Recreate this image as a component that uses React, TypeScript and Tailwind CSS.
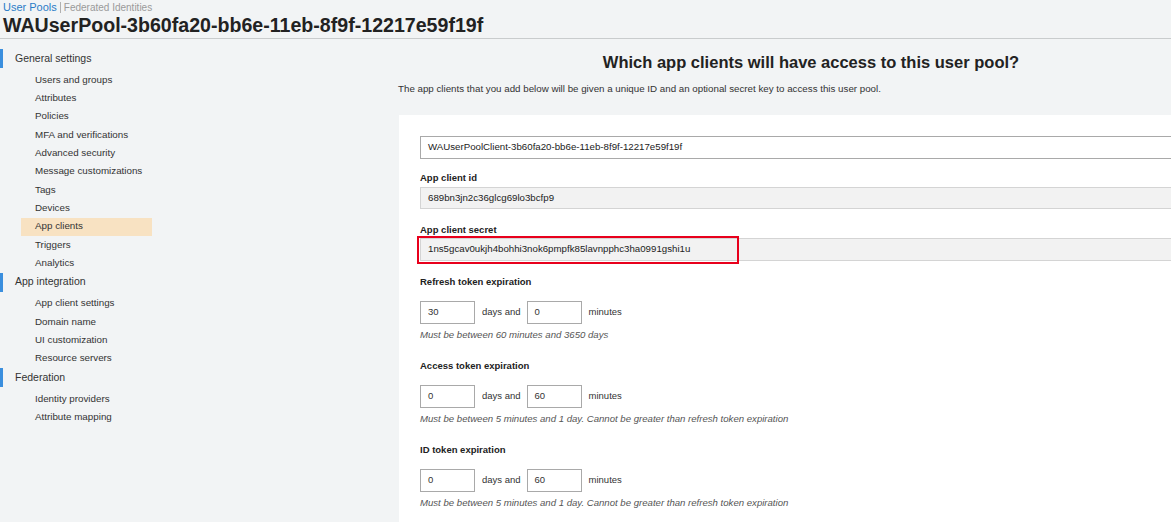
import React from 'react';

const font = { fontFamily: '"Liberation Sans", Arial, sans-serif' };

type NavSection = { title: string; items: string[] };

const sections: NavSection[] = [
  {
    title: 'General settings',
    items: [
      'Users and groups',
      'Attributes',
      'Policies',
      'MFA and verifications',
      'Advanced security',
      'Message customizations',
      'Tags',
      'Devices',
      'App clients',
      'Triggers',
      'Analytics'
    ]
  },
  {
    title: 'App integration',
    items: ['App client settings', 'Domain name', 'UI customization', 'Resource servers']
  },
  { title: 'Federation', items: ['Identity providers', 'Attribute mapping'] }
];

function Sidebar(): JSX.Element {
  return (
    <nav className="w-[398px] shrink-0 pt-[10px] text-[9.8px] text-[#333]">
      {sections.map((s) => (
        <div key={s.title}>
          <div className="flex items-center h-[19px] mb-[3px] border-l-[3px] border-[#3b8fde] pl-[12px] text-[10.5px]">
            {s.title}
          </div>
          {s.items.map((item) => (
            <div key={item} className="h-[18.33px] flex items-center">
              <div
                className={
                  item === 'App clients'
                    ? 'ml-[21px] w-[131px] h-[18px] flex items-center pl-[14px] bg-[#f8e2c2]'
                    : 'ml-[35px]'
                }>
                {item}
              </div>
            </div>
          ))}
        </div>
      ))}
    </nav>
  );
}

function TimeRow({ days, minutes }: { days: string; minutes: string }): JSX.Element {
  return (
    <div className="flex items-center h-[23px] text-[9.5px] text-[#333]">
      <div className="w-[55px] h-full border border-[#a9a9a9] bg-white flex items-center pl-[7px]">{days}</div>
      <span className="ml-[7px] mr-[6px]">days and</span>
      <div className="w-[55px] h-full border border-[#a9a9a9] bg-white flex items-center pl-[7px]">{minutes}</div>
      <span className="ml-[7px]">minutes</span>
    </div>
  );
}

function Label({ children, mt }: { children: React.ReactNode; mt: string }): JSX.Element {
  return <div className={`${mt} h-[12px] leading-[12px] text-[9.5px] font-bold text-[#222]`}>{children}</div>;
}

function Hint({ children }: { children: React.ReactNode }): JSX.Element {
  return <div className="mt-[5px] h-[12px] leading-[12px] text-[9.6px] italic text-[#555]">{children}</div>;
}

export default function App(): JSX.Element {
  return (
    <div className="w-[1171px] h-[522px] overflow-hidden bg-[#f2f4f5]" style={font}>
      <header className="h-[39px] border-b border-[#c9cccd] pl-[3px]">
        <div className="flex items-center h-[14px] text-[11px]">
          <span className="text-[#2a7cc7]">User Pools</span>
          <span className="mx-[3px] w-px h-[11px] bg-[#b0b0b0]" />
          <span className="text-[10px] text-[#9a9a9a]">Federated Identities</span>
        </div>
        <h1 className="text-[19.6px] leading-[22px] font-bold text-[#222]">
          WAUserPool-3b60fa20-bb6e-11eb-8f9f-12217e59f19f
        </h1>
      </header>

      <div className="flex">
        <Sidebar />

        <main className="w-[826px] shrink-0">
          <h2 className="mt-[13px] h-[20px] leading-[20px] text-center text-[16.5px] font-bold text-[#222]">
            Which app clients will have access to this user pool?
          </h2>
          <p className="mt-[11px] h-[12px] leading-[12px] text-[9.75px] text-[#333]">
            The app clients that you add below will be given a unique ID and an optional secret key to access this user
            pool.
          </p>

          <section className="mt-[20px] ml-px h-[420px] bg-white pt-[21px] pl-[21px]">
            <div className="h-[23px] border border-[#a9a9a9] flex items-center pl-[7px] text-[9.7px] text-[#222]">
              WAUserPoolClient-3b60fa20-bb6e-11eb-8f9f-12217e59f19f
            </div>

            <Label mt="mt-[13px]">App client id</Label>
            <div className="mt-[3px] h-[22px] bg-[#f2f2f2] border border-[#d4d4d4] flex items-center pl-[7px] text-[9.7px] text-[#222]">
              689bn3jn2c36glcg69lo3bcfp9
            </div>

            <Label mt="mt-[15px]">App client secret</Label>
            <div className="relative mt-[2px] h-[23px] bg-[#f2f2f2] border border-[#d4d4d4] flex items-center pl-[7px] text-[9.7px] text-[#222]">
              1ns5gcav0ukjh4bohhi3nok6pmpfk85lavnpphc3ha0991gshi1u
              <div className="absolute left-[-4px] top-[-3px] w-[322px] h-[28px] border-2 border-[#e8001c]" />
            </div>

            <Label mt="mt-[15px]">Refresh token expiration</Label>
            <div className="mt-[13px]">
              <TimeRow days="30" minutes="0" />
            </div>
            <Hint>Must be between 60 minutes and 3650 days</Hint>

            <Label mt="mt-[19px]">Access token expiration</Label>
            <div className="mt-[13px]">
              <TimeRow days="0" minutes="60" />
            </div>
            <Hint>Must be between 5 minutes and 1 day. Cannot be greater than refresh token expiration</Hint>

            <Label mt="mt-[19px]">ID token expiration</Label>
            <div className="mt-[13px]">
              <TimeRow days="0" minutes="60" />
            </div>
            <Hint>Must be between 5 minutes and 1 day. Cannot be greater than refresh token expiration</Hint>
          </section>
        </main>
      </div>
    </div>
  );
}
